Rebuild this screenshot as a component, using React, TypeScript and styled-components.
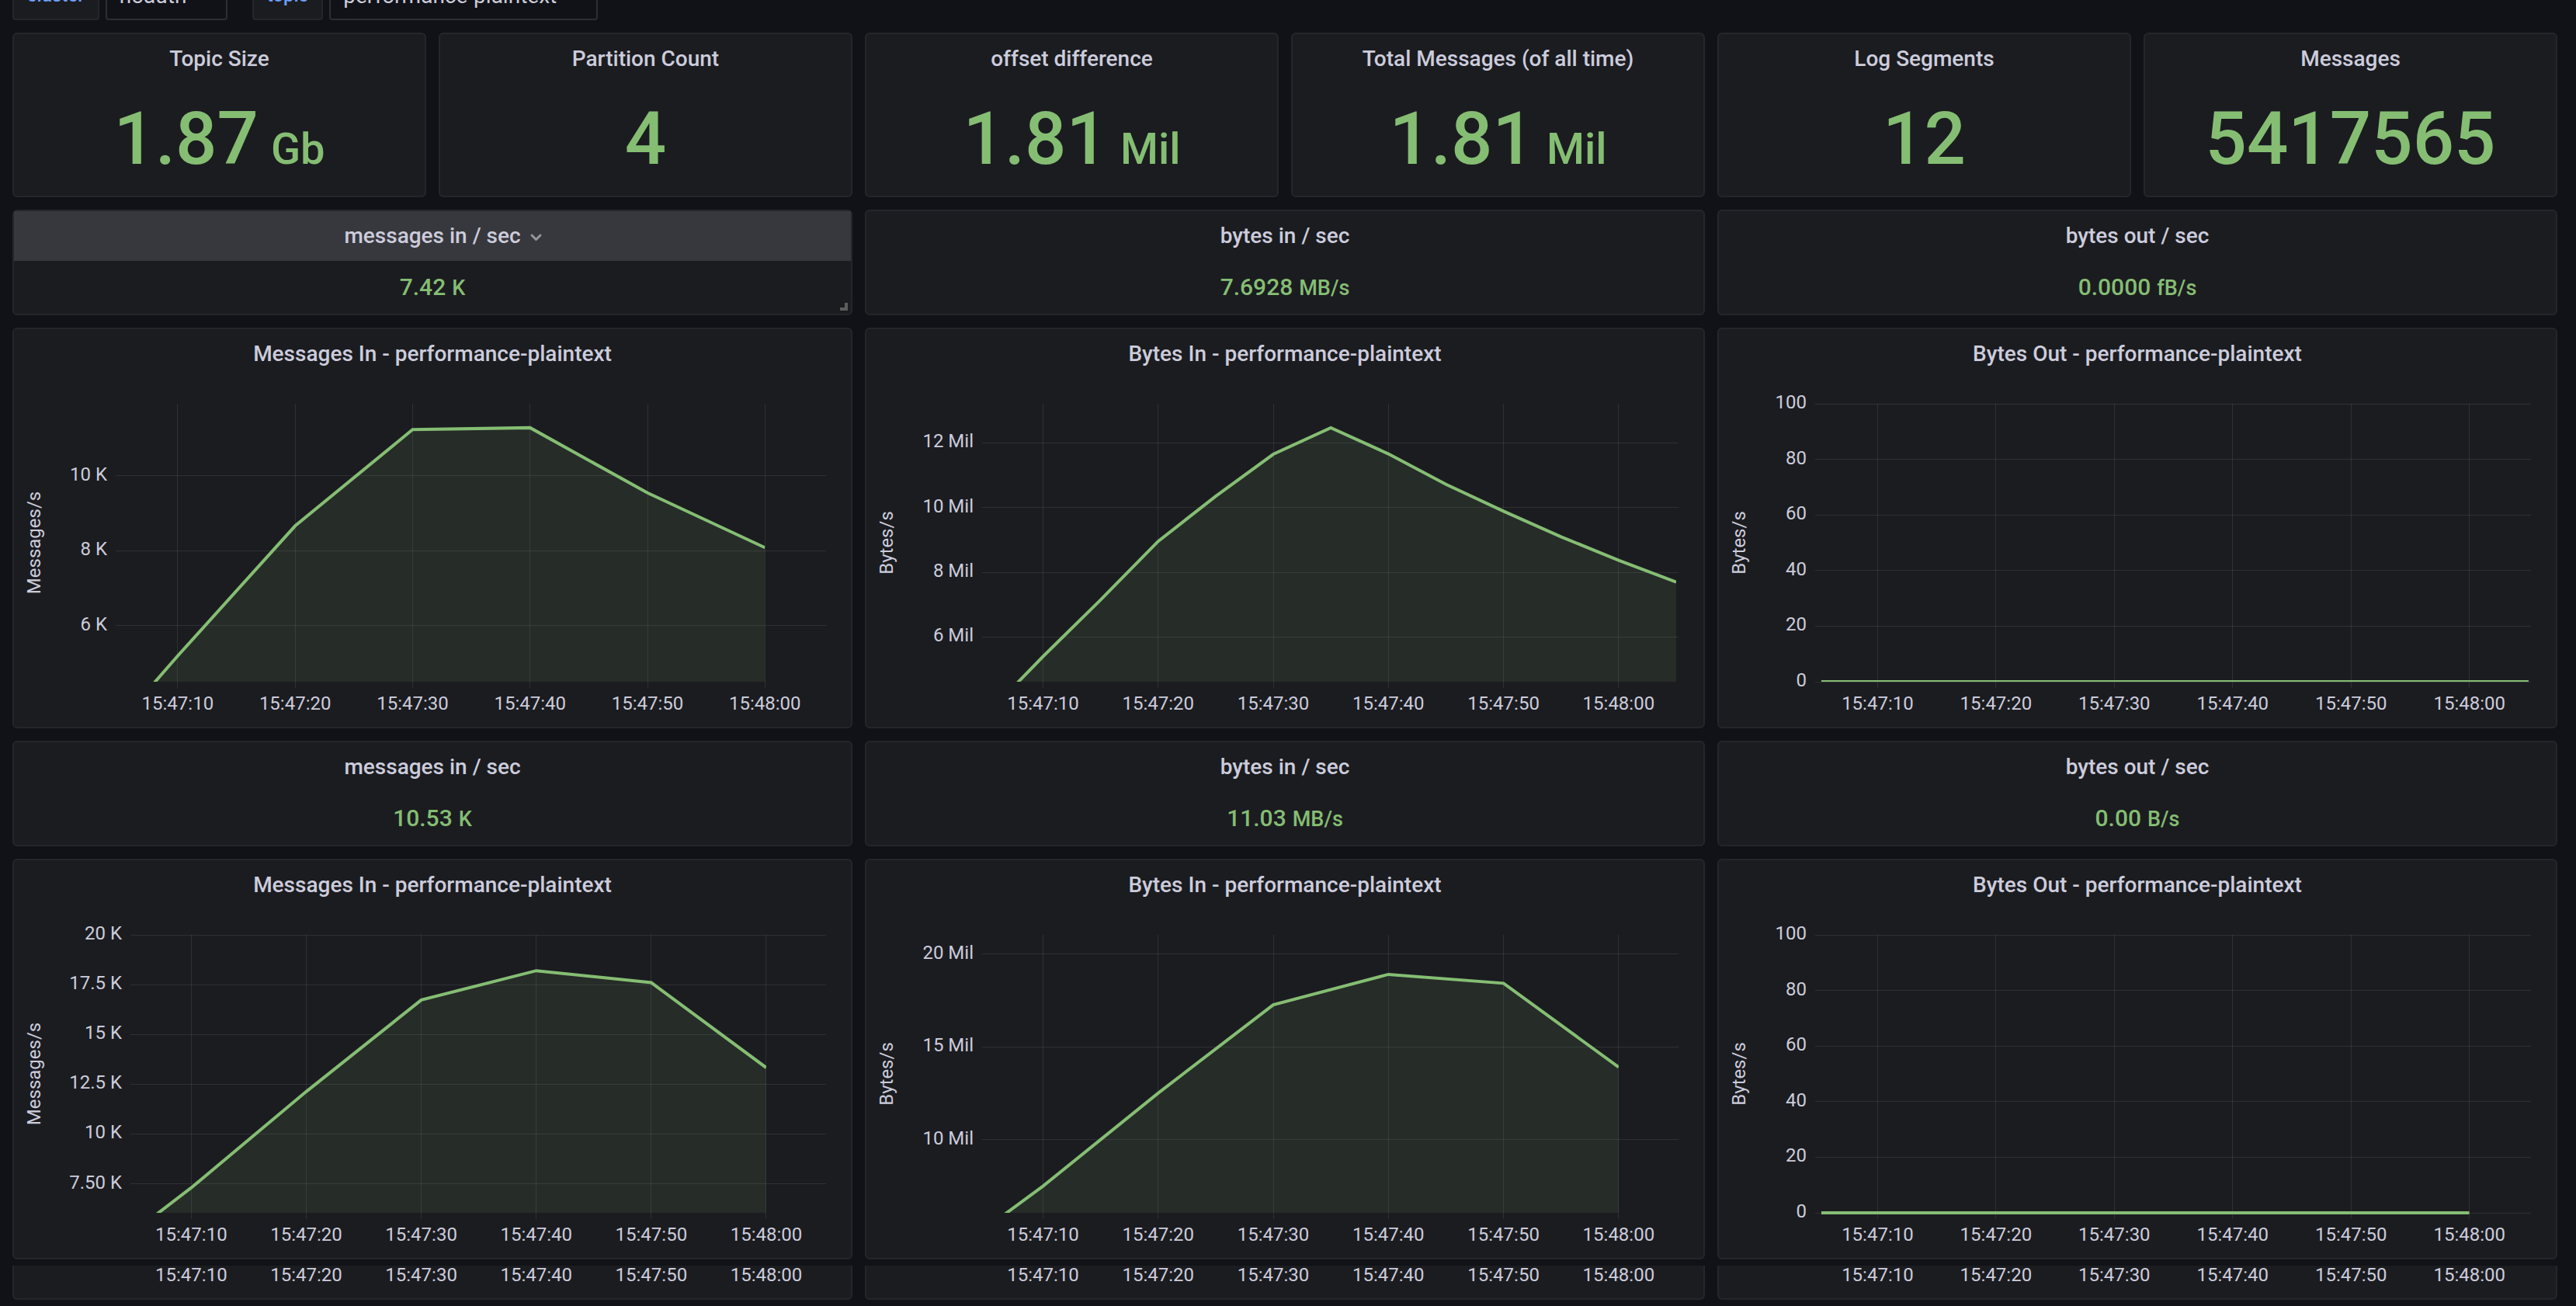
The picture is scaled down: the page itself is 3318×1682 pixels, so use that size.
import React, { useId, useLayoutEffect, useRef, useState } from "react";
import styled, { createGlobalStyle } from "styled-components";

const color = {
  canvas: "#111217",
  panel: "#1b1c20",
  border: "#25262a",
  inputBorder: "#2d2e33",
  headerHover: "#37383d",
  text: "#ccccdc",
  link: "#6e9fff",
  green: "#85be73",
  grid: "rgba(240, 250, 255, 0.09)",
};

const GlobalStyle = createGlobalStyle`
  *, *::before, *::after { box-sizing: border-box; }
  body {
    margin: 0;
    background: ${color.canvas};
    color: ${color.text};
    font-family: Roboto, "Liberation Sans", sans-serif;
    font-size: 28px;
  }
`;

const Page = styled.div`
  display: flex;
  flex-direction: column;
  gap: 16px;
  padding: 0 24px 8px 16px;
`;

const Toolbar = styled.form`
  display: flex;
  align-items: flex-end;
  gap: 32px;
  height: 26px;
  overflow: hidden;
`;

const Variable = styled.div`
  display: flex;
  gap: 8px;
`;

const VariableLabel = styled.label`
  display: flex;
  align-items: center;
  height: 64px;
  padding: 0 17px;
  border: 2px solid ${color.border};
  border-radius: 4px;
  background: ${color.panel};
  color: ${color.link};
  font-size: 24px;
  font-weight: 500;
`;

const VariableSelect = styled.select`
  appearance: none;
  height: 64px;
  padding: 0 50px 0 16px;
  border: 2px solid ${color.inputBorder};
  border-radius: 4px;
  background: ${color.canvas};
  color: ${color.text};
  font: inherit;
`;

const Row = styled.section<{ $columns: number }>`
  display: grid;
  grid-template-columns: repeat(${(p) => p.$columns}, minmax(0, 1fr));
  gap: 16px;
`;

const PanelBox = styled.article`
  position: relative;
  border: 2px solid ${color.border};
  border-radius: 6px;
  background: ${color.panel};
`;

const PanelHeader = styled.header<{ $hovered?: boolean }>`
  display: flex;
  align-items: center;
  justify-content: center;
  height: 64px;
  background: ${(p) => (p.$hovered ? color.headerHover : "transparent")};
`;

const PanelTitle = styled.h2`
  margin: 0;
  font-size: 28px;
  line-height: 44px;
  font-weight: 500;
`;

const MenuButton = styled.button`
  position: relative;
  padding: 0;
  border: 0;
  background: none;
  color: inherit;
  font: inherit;
`;

const Chevron = styled.svg`
  position: absolute;
  left: 100%;
  top: 12px;
  width: 32px;
  height: 24px;
  fill: none;
  stroke: #95959f;
  stroke-width: 3;
  stroke-linecap: round;
  stroke-linejoin: round;
`;

const ResizeHandle = styled.span`
  position: absolute;
  right: 4px;
  bottom: 4px;
  width: 10px;
  height: 10px;
  border: solid #5c5c5c;
  border-width: 0 4px 4px 0;
`;

const Reading = styled.p<{ $large?: boolean }>`
  display: flex;
  align-items: baseline;
  justify-content: center;
  gap: ${(p) => (p.$large ? 16 : 8)}px;
  height: ${(p) => (p.$large ? 144 : 68)}px;
  margin: 0;
  color: ${color.green};
  font-size: ${(p) => (p.$large ? 94 : 30)}px;
  line-height: ${(p) => (p.$large ? 142 : 68)}px;
  font-weight: 500;
`;

const Unit = styled.span<{ $large?: boolean }>`
  font-size: ${(p) => (p.$large ? 56 : 27)}px;
`;

const ChartSvg = styled.svg`
  display: block;
  width: 100%;
  overflow: visible;
`;

const AxisText = styled.text`
  fill: ${color.text};
  font-size: 24px;
`;

const ClippedPanel = styled.article`
  margin-top: -8px;
  border: 2px solid ${color.border};
  border-top: 0;
  border-radius: 0 0 6px 6px;
  background: ${color.panel};
`;

type Point = [number, number];

interface ChartSpec {
  title: string;
  axis: string;
  gutter: number;
  min: number;
  max: number;
  ticks: [number, string][];
  points: Point[];
  bleed?: number;
}

/* Seconds after 15:47:00 */
const TIME_START = 5.25;
const TIME_END = 65.2;
const TIME_TICKS: [number, string][] = [
  [10, "15:47:10"],
  [20, "15:47:20"],
  [30, "15:47:30"],
  [40, "15:47:40"],
  [50, "15:47:50"],
  [60, "15:48:00"],
];

const CHART_HEIGHT = 448;
const PLOT_TOP = 32;
const PLOT_BOTTOM = 390;
const TICK = 8;

function useWidth() {
  const ref = useRef<SVGSVGElement>(null);
  const [width, setWidth] = useState(1078);
  useLayoutEffect(() => {
    const node = ref.current;
    if (!node) return;
    const measure = () => setWidth(node.getBoundingClientRect().width);
    measure();
    const observer = new ResizeObserver(measure);
    observer.observe(node);
    return () => observer.disconnect();
  }, []);
  return { ref, width };
}

function timeScale(gutter: number, width: number) {
  const left = gutter + TICK;
  const right = width - 32;
  return (t: number) => left + ((t - TIME_START) / (TIME_END - TIME_START)) * (right - left);
}

function Chart({ spec }: { spec: ChartSpec }) {
  const { ref, width } = useWidth();
  const clip = useId();
  const { gutter, min, max, bleed = 0 } = spec;
  const right = width - 32;
  const x = timeScale(gutter, width);
  const y = (v: number) => PLOT_BOTTOM - ((v - min) / (max - min)) * (PLOT_BOTTOM - PLOT_TOP);
  const line = spec.points.map(([t, v]) => `${x(t)},${y(v)}`).join(" L");
  const first = x(spec.points[0][0]);
  const last = x(spec.points[spec.points.length - 1][0]);

  return (
    <ChartSvg ref={ref} height={CHART_HEIGHT} role="img" aria-label={spec.title}>
      <clipPath id={clip}>
        <rect
          x={gutter + TICK}
          y={PLOT_TOP}
          width={Math.max(0, last - gutter - TICK)}
          height={PLOT_BOTTOM - PLOT_TOP + bleed}
        />
      </clipPath>
      <g stroke={color.grid} shapeRendering="crispEdges">
        {spec.ticks.map(([v, label]) => (
          <line key={label} x1={gutter} x2={right} y1={y(v)} y2={y(v)} />
        ))}
        {TIME_TICKS.map(([t, label]) => (
          <line key={label} x1={x(t)} x2={x(t)} y1={PLOT_TOP} y2={PLOT_BOTTOM + TICK} />
        ))}
      </g>
      <g clipPath={`url(#${clip})`}>
        <path d={`M${line} L${last},${PLOT_BOTTOM} L${first},${PLOT_BOTTOM} Z`} fill={color.green} fillOpacity={0.1} />
        <path d={`M${line}`} fill="none" stroke={color.green} strokeWidth={4} />
      </g>
      {spec.ticks.map(([v, label]) => (
        <AxisText key={label} x={gutter - 11} y={y(v) + 6} textAnchor="end">
          {label}
        </AxisText>
      ))}
      <TimeLabels gutter={gutter} width={width} baseline={426} />
      <AxisText
        transform={`translate(34 ${(PLOT_TOP + PLOT_BOTTOM) / 2}) rotate(-90)`}
        textAnchor="middle"
      >
        {spec.axis}
      </AxisText>
    </ChartSvg>
  );
}

function TimeLabels({ gutter, width, baseline }: { gutter: number; width: number; baseline: number }) {
  const x = timeScale(gutter, width);
  return (
    <>
      {TIME_TICKS.map(([t, label]) => (
        <AxisText key={label} x={x(t)} y={baseline} textAnchor="middle">
          {label}
        </AxisText>
      ))}
    </>
  );
}

function TimeStrip({ gutter }: { gutter: number }) {
  const { ref, width } = useWidth();
  return (
    <ClippedPanel>
      <ChartSvg ref={ref} height={42}>
        <TimeLabels gutter={gutter} width={width} baseline={20} />
      </ChartSvg>
    </ClippedPanel>
  );
}

interface StatSpec {
  title: string;
  value: string;
  unit?: string;
  hovered?: boolean;
}

function StatPanel({ title, value, unit, hovered, large }: StatSpec & { large?: boolean }) {
  return (
    <PanelBox>
      <PanelHeader $hovered={hovered}>
        <PanelTitle>
          {hovered ? (
            <MenuButton type="button">
              {title}
              <Chevron viewBox="0 0 32 24" aria-hidden="true">
                <path d="M14 9l5.500 5.500L25 9" />
              </Chevron>
            </MenuButton>
          ) : (
            title
          )}
        </PanelTitle>
      </PanelHeader>
      <Reading $large={large}>
        {value}
        {unit && <Unit $large={large}>{unit}</Unit>}
      </Reading>
      {hovered && <ResizeHandle />}
    </PanelBox>
  );
}

function ChartPanel({ spec }: { spec: ChartSpec }) {
  return (
    <PanelBox>
      <PanelHeader>
        <PanelTitle>{spec.title}</PanelTitle>
      </PanelHeader>
      <Chart spec={spec} />
    </PanelBox>
  );
}

const totals: StatSpec[] = [
  { title: "Topic Size", value: "1.87", unit: "Gb" },
  { title: "Partition Count", value: "4" },
  { title: "offset difference", value: "1.81", unit: "Mil" },
  { title: "Total Messages (of all time)", value: "1.81", unit: "Mil" },
  { title: "Log Segments", value: "12" },
  { title: "Messages", value: "5417565" },
];

const currentRates: StatSpec[] = [
  { title: "messages in / sec", value: "7.42", unit: "K", hovered: true },
  { title: "bytes in / sec", value: "7.6928", unit: "MB/s" },
  { title: "bytes out / sec", value: "0.0000", unit: "fB/s" },
];

const averageRates: StatSpec[] = [
  { title: "messages in / sec", value: "10.53", unit: "K" },
  { title: "bytes in / sec", value: "11.03", unit: "MB/s" },
  { title: "bytes out / sec", value: "0.00", unit: "B/s" },
];

const percentTicks: [number, string][] = [
  [100, "100"],
  [80, "80"],
  [60, "60"],
  [40, "40"],
  [20, "20"],
  [0, "0"],
];

const currentCharts: ChartSpec[] = [
  {
    title: "Messages In - performance-plaintext",
    axis: "Messages/s",
    gutter: 131,
    min: 4.5,
    max: 11.92,
    ticks: [[10, "10 K"], [8, "8 K"], [6, "6 K"]],
    points: [[5.25, 3.48], [10, 5.19], [20, 8.66], [30, 11.23], [40, 11.28], [50, 9.54], [60, 8.08]],
  },
  {
    title: "Bytes In - performance-plaintext",
    axis: "Bytes/s",
    gutter: 149,
    min: 4.62,
    max: 13.21,
    ticks: [[12, "12 Mil"], [10, "10 Mil"], [8, "8 Mil"], [6, "6 Mil"]],
    points: [
      [5.25, 3.66], [10, 5.4], [15, 7.15], [20, 8.96], [25, 10.35], [30, 11.65], [35, 12.47],
      [40, 11.66], [45, 10.72], [50, 9.89], [55, 9.1], [60, 8.37], [65, 7.7],
    ],
  },
  {
    title: "Bytes Out - performance-plaintext",
    axis: "Bytes/s",
    gutter: 124,
    min: 0,
    max: 100,
    ticks: percentTicks,
    points: [[5.25, 0], [65, 0]],
  },
];

const averageCharts: ChartSpec[] = [
  {
    title: "Messages In - performance-plaintext",
    axis: "Messages/s",
    gutter: 150,
    min: 6.04,
    max: 20,
    ticks: [[20, "20 K"], [17.5, "17.5 K"], [15, "15 K"], [12.5, "12.5 K"], [10, "10 K"], [7.5, "7.50 K"]],
    points: [[5.25, 5.2], [10, 7.3], [20, 12.13], [30, 16.73], [40, 18.2], [50, 17.6], [60, 13.33]],
  },
  {
    title: "Bytes In - performance-plaintext",
    axis: "Bytes/s",
    gutter: 149,
    min: 6.05,
    max: 21.03,
    ticks: [[20, "20 Mil"], [15, "15 Mil"], [10, "10 Mil"]],
    points: [[5.25, 5.32], [10, 7.49], [20, 12.5], [30, 17.26], [40, 18.9], [50, 18.42], [60, 13.9]],
  },
  {
    title: "Bytes Out - performance-plaintext",
    axis: "Bytes/s",
    gutter: 124,
    min: 0,
    max: 100,
    ticks: percentTicks,
    points: [[5.25, 0], [60, 0]],
    bleed: 4,
  },
];

export default function App() {
  return (
    <>
      <GlobalStyle />
      <Page>
        <Toolbar>
          <Variable>
            <VariableLabel htmlFor="cluster">cluster</VariableLabel>
            <VariableSelect id="cluster">
              <option>noauth</option>
            </VariableSelect>
          </Variable>
          <Variable>
            <VariableLabel htmlFor="topic">topic</VariableLabel>
            <VariableSelect id="topic">
              <option>performance-plaintext</option>
            </VariableSelect>
          </Variable>
        </Toolbar>
        <Row $columns={6}>
          {totals.map((stat) => (
            <StatPanel key={stat.title} {...stat} large />
          ))}
        </Row>
        <Row $columns={3}>
          {currentRates.map((stat) => (
            <StatPanel key={stat.title} {...stat} />
          ))}
        </Row>
        <Row $columns={3}>
          {currentCharts.map((spec) => (
            <ChartPanel key={spec.title} spec={spec} />
          ))}
        </Row>
        <Row $columns={3}>
          {averageRates.map((stat) => (
            <StatPanel key={stat.title} {...stat} />
          ))}
        </Row>
        <Row $columns={3}>
          {averageCharts.map((spec) => (
            <ChartPanel key={spec.title} spec={spec} />
          ))}
        </Row>
        <Row $columns={3}>
          {averageCharts.map((spec) => (
            <TimeStrip key={spec.title} gutter={spec.gutter} />
          ))}
        </Row>
      </Page>
    </>
  );
}
